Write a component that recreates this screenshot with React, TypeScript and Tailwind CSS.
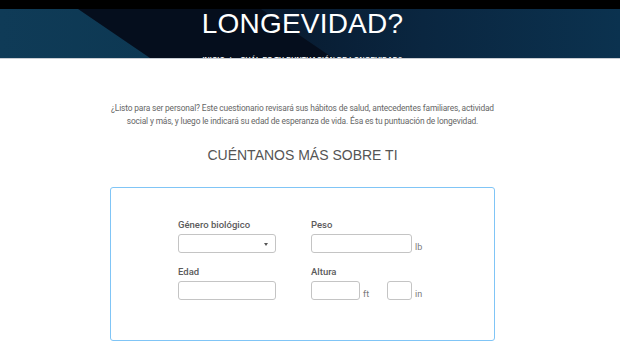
import React from "react";

const body = { fontFamily: "Roboto, 'Liberation Sans', sans-serif" };
const head = { fontFamily: "'Liberation Sans', Arial, sans-serif" };

function HeroBackground() {
  return (
    <svg
      className="absolute inset-0 h-full w-full"
      viewBox="0 0 620 49"
      preserveAspectRatio="none"
    >
      <defs>
        <linearGradient id="lt" x1="0" y1="0" x2="1" y2="0">
          <stop offset="0" stopColor="#0f3b57" />
          <stop offset="1" stopColor="#0d3853" />
        </linearGradient>
        <linearGradient id="rt" x1="0" y1="0" x2="1" y2="0">
          <stop offset="0" stopColor="#081a2f" />
          <stop offset="0.45" stopColor="#0a2640" />
          <stop offset="1" stopColor="#0b324f" />
        </linearGradient>
      </defs>
      <rect x="0" y="0" width="620" height="49" fill="#050e1d" />
      <polygon points="0,0 78,0 150,49 0,49" fill="url(#lt)" />
      <polygon points="261,0 620,0 620,49 333,49" fill="url(#rt)" />
    </svg>
  );
}

function Field({
  label,
  children,
}: {
  label: string;
  children: React.ReactNode;
}) {
  return (
    <div className="flex flex-col">
      <label className="text-[9.5px] leading-[12px] font-medium text-[#5b5b5b]">
        {label}
      </label>
      <div className="mt-[3px] flex items-end">{children}</div>
    </div>
  );
}

const inputCls =
  "h-[19px] rounded-[3px] border border-[#c4c4c4] bg-white outline-none";

const unitCls = "ml-[3px] text-[9px] leading-[12px] text-[#7a7a7a]";

export default function App(): React.JSX.Element {
  return (
    <div className="h-[353px] w-[620px] overflow-hidden bg-white" style={body}>
      <div className="h-[9px] bg-black" />

      {/* Hero */}
      <header className="relative h-[50px] overflow-hidden border-b border-[#c9cdd3]">
        <HeroBackground />
        <div className="relative flex flex-col items-center pr-[15px]">
          <h1
            className="pt-[1px] text-[28px] leading-none tracking-[0.2px] text-white"
            style={head}
          >
            LONGEVIDAD?
          </h1>
          <p
            className="mt-[18px] whitespace-nowrap text-[7px] font-bold leading-none tracking-[0.2px] text-white"
            style={head}
          >
            INICIO &nbsp;/&nbsp; ¿CUÁL ES TU PUNTUACIÓN DE LONGEVIDAD?
          </p>
        </div>
      </header>

      <main className="pl-[110px] pr-[125px]">
        <p className="-mx-[10px] mt-[43px] text-center text-[8.4px] leading-[13px] tracking-[-0.16px] text-[#666]">
          ¿Listo para ser personal? Este cuestionario revisará sus hábitos de
          salud, antecedentes familiares, actividad
          <br />
          social y más, y luego le indicará su edad de esperanza de vida. Ésa
          es tu puntuación de longevidad.
        </p>

        <h2
          className="mt-[19px] text-center text-[14px] leading-[16px] text-[#555]"
          style={head}
        >
          CUÉNTANOS MÁS SOBRE TI
        </h2>

        <form className="mt-[24px] h-[154px] rounded-[3px] border-[1.5px] border-[#80c5f6] pl-[67px] pt-[31px]">
          <div className="grid grid-cols-[98px_auto] gap-x-[35px] gap-y-[13px]">
            <Field label="Género biológico">
              <div className={`${inputCls} relative w-[98px]`}>
                <span className="absolute right-[7px] top-[8px] h-0 w-0 border-x-[2.5px] border-t-[3px] border-x-transparent border-t-[#555]" />
              </div>
            </Field>
            <Field label="Peso">
              <div className={`${inputCls} w-[101px]`} />
              <span className={unitCls}>lb</span>
            </Field>
            <Field label="Edad">
              <div className={`${inputCls} w-[98px]`} />
            </Field>
            <Field label="Altura">
              <div className={`${inputCls} w-[49px]`} />
              <span className={`${unitCls} w-[24px]`}>ft</span>
              <div className={`${inputCls} w-[25px]`} />
              <span className={unitCls}>in</span>
            </Field>
          </div>
        </form>
      </main>
    </div>
  );
}
